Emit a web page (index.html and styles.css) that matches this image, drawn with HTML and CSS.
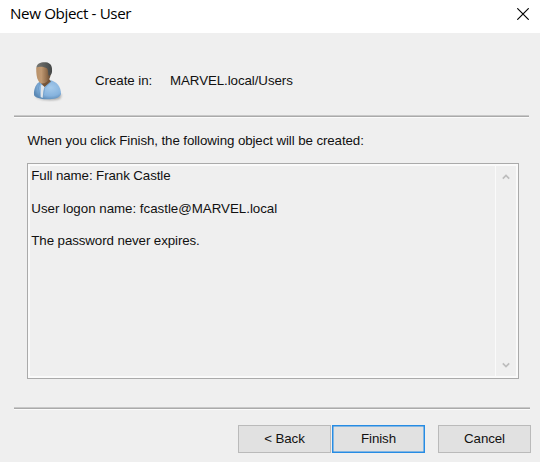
FILE: index.html
```html
<!DOCTYPE html>
<html lang="en">
<head>
<meta charset="utf-8">
<title>New Object - User</title>
<link rel="stylesheet" href="styles.css">
</head>
<body>
<main class="dialog">
  <header class="titlebar">
    <h1 class="title">New Object - User</h1>
    <svg class="close" viewBox="0 0 12 12" role="img" aria-label="Close"><path d="M.3.3l11.4 11.4M11.7.3L.3 11.7"/></svg>
  </header>
  <section class="location">
    <svg class="user" viewBox="0 0 32 42" aria-hidden="true">
      <defs>
        <linearGradient id="skin" x1="0" x2="1"><stop offset="0" stop-color="#b99169"/><stop offset=".35" stop-color="#c09a74"/><stop offset=".7" stop-color="#94704f"/><stop offset="1" stop-color="#5f452f"/></linearGradient>
        <linearGradient id="hair" x1="0" x2="1"><stop offset="0" stop-color="#777874"/><stop offset="1" stop-color="#434646"/></linearGradient>
        <radialGradient id="shirt" cx=".62" cy=".4" r=".65"><stop offset="0" stop-color="#a5caeb"/><stop offset=".65" stop-color="#86b3de"/><stop offset="1" stop-color="#5b89b5"/></radialGradient>
        <filter id="soft" x="-20%" y="-20%" width="140%" height="140%"><feGaussianBlur stdDeviation=".8"/></filter>
        <filter id="edge"><feGaussianBlur stdDeviation=".35"/></filter>
      </defs>
      <path d="M3 36Q15 42 30 34L28 39Q15 42 5 38Z" fill="#777" opacity=".6" filter="url(#soft)"/>
      <g filter="url(#edge)">
        <path d="M2 35C1.5 29 4 23 9 21L17 20C25 21 29 27 29 34C28 38 22 39.3 15 39.3C8 39.3 3 37.5 2 35Z" fill="url(#shirt)"/>
        <path d="M9 25L13 26L11.5 31L11 38L8.5 37Z" fill="#e1e5e9"/>
        <path d="M8 18L18 14C16.5 17 16.5 19 19 21.5L12.5 27L8 22Z" fill="#755437"/>
        <path d="M8 22L6.5 28L8 37M19 21.5L12.5 28L11 38" fill="none" stroke="#6696c4" stroke-width=".7"/>
        <path d="M4.2 8C5 4 16 4 18 9C19.5 13 18.5 18 16.5 20C14 24 9 25 6.5 21C4.5 18 4.2 13 4.2 8Z" fill="url(#skin)"/>
        <path d="M4.5 7.5C4.5 3.5 9 1.8 14 2.2C18.5 2.8 20.3 6 20 10C20.3 13 19 15.7 17 15.8C15.7 14.8 16.6 11 15.2 8.5C12 6.3 7 6.5 4.5 7.5Z" fill="url(#hair)"/>
      </g>
    </svg>
    <span class="label">Create in:</span>
    <span class="path">MARVEL.local/Users</span>
  </section>
  <div class="rule"></div>
  <p class="prompt">When you click Finish, the following object will be created:</p>
  <section class="summary">
    <div class="lines">
      <p class="fullname">Full name: Frank Castle</p>
      <p class="logon">User logon name: fcastle@MARVEL.local</p>
      <p class="expiry">The password never expires.</p>
    </div>
    <div class="scrollbar">
      <svg viewBox="0 0 8 6" aria-hidden="true"><path d="M.8 4.7L4 1.5l3.2 3.2"/></svg>
      <svg viewBox="0 0 8 6" aria-hidden="true"><path d="M.8 1.3L4 4.5l3.2-3.2"/></svg>
    </div>
  </section>
  <div class="rule bottom"></div>
  <footer class="actions">
    <button>&lt; Back</button>
    <button class="primary">Finish</button>
    <button class="cancel">Cancel</button>
  </footer>
</main>
</body>
</html>
```
FILE: styles.css
```css
* { box-sizing: border-box; }
body { margin: 0; background: #efefef; color: #111; font: 13.33px/16px "Liberation Sans", Arial, sans-serif; }
p, h1 { margin: 0; }
.dialog { height: 462px; overflow: hidden; }
.titlebar { display: flex; justify-content: space-between; height: 33px; padding: 3px 11px 0 10px; background: #fff; }
.title { font: 400 15.2px/20px "Open Sans", "Noto Sans", sans-serif; color: #000; letter-spacing: -.38px; white-space: nowrap; }
.close { width: 12px; height: 12px; margin-top: 5px; fill: none; stroke: #000; stroke-width: 1.15; }
.location { display: flex; height: 82px; padding-left: 32px; }
.user { width: 32px; height: 42px; margin-top: 27px; flex: none; }
.label { width: 75px; margin: 40px 0 0 31px; letter-spacing: -.06px; }
.path { margin-top: 40px; letter-spacing: -.08px; }
.rule { width: 515px; height: 3px; margin-left: 14px; background: #fbfbfb; border-top: 1px solid #c8c8c8; border-bottom: 1px solid #fbfbfb; box-shadow: inset 0 1px #aaa; }
.prompt { margin: 15px 0 14px 27.5px; letter-spacing: -.1px; white-space: nowrap; }
.summary { display: flex; width: 492px; height: 216px; margin-left: 27px; border: 1px solid #aaa; box-shadow: inset 0 0 0 2px #fafafa; }
.lines { flex: 1; padding: 4px 0 0 3.3px; }
.lines p { margin-bottom: 16.5px; white-space: nowrap; letter-spacing: -.1px; }
.lines .logon { letter-spacing: -.02px; }
.scrollbar { display: flex; flex-direction: column; justify-content: space-between; align-items: center; width: 21px; margin: 2px; padding: 8px 0; border-left: 1px solid #fafafa; }
.scrollbar svg { width: 8px; height: 6px; fill: none; stroke: #bdbdbd; stroke-width: 1.7; }
.bottom { width: 516px; margin-top: 28px; }
.actions { display: flex; justify-content: flex-end; gap: 1px; padding: 15px 9px 0; }
button { width: 93px; height: 28px; padding: 0; font: inherit; letter-spacing: -.1px; color: #111; background: #e1e1e1; border: 1px solid #bababa; border-radius: 0; }
.primary { border: 1.5px solid #268ce4; box-shadow: inset 0 0 0 .5px #268ce4; }
.cancel { margin-left: 12px; }
```
